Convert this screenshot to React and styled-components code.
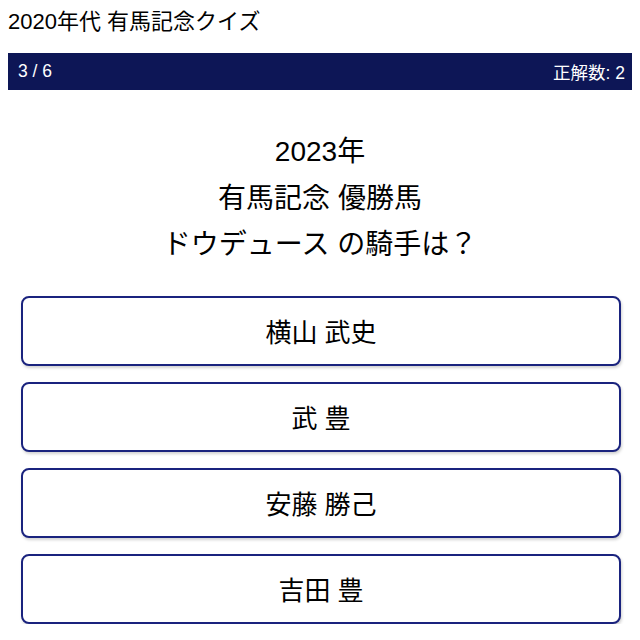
import styled, { createGlobalStyle } from 'styled-components';

const GlobalStyle = createGlobalStyle`
  body {
    margin: 8px;
    font-family: "Liberation Sans", "Noto Sans CJK JP", sans-serif;
    background: #fff;
    color: #000;
  }
`;

const Title = styled.h1`
  margin: 0;
  padding-top: 1px;
  font-size: 22px;
  font-weight: normal;
  line-height: 26px;
  height: 44px;
`;

const StatusBar = styled.div`
  display: flex;
  justify-content: space-between;
  align-items: center;
  height: 37px;
  padding: 0 9px 0 10px;
  margin-right: -2px;
  background-color: #0d1656;
  color: #fff;
  font-size: 17.5px;
`;

const Question = styled.div`
  padding-top: 39px;
  text-align: center;
  font-size: 28px;
  line-height: 46.5px;
`;

const Choices = styled.div`
  display: flex;
  flex-direction: column;
  gap: 16px;
  padding: 27px 11px 0 13px;
`;

const ChoiceButton = styled.button`
  height: 70px;
  background: #fff;
  border: 2px solid #1a237e;
  border-radius: 8px;
  box-shadow: 1px 2px 3px rgba(0, 0, 0, 0.18);
  font-family: inherit;
  font-size: 26px;
  color: #000;
  cursor: pointer;
`;

const choices = ['横山 武史', '武 豊', '安藤 勝己', '吉田 豊'];

export default function App () {
  return (
    <>
      <GlobalStyle />
      <Title>2020年代 有馬記念クイズ</Title>
      <StatusBar>
        <span>3 / 6</span>
        <span>正解数: 2</span>
      </StatusBar>
      <Question>
        <div>2023年</div>
        <div>有馬記念 優勝馬</div>
        <div>ドウデュース の騎手は？</div>
      </Question>
      <Choices>
        {choices.map((c) => (
          <ChoiceButton key={c}>{c}</ChoiceButton>
        ))}
      </Choices>
    </>
  );
}
